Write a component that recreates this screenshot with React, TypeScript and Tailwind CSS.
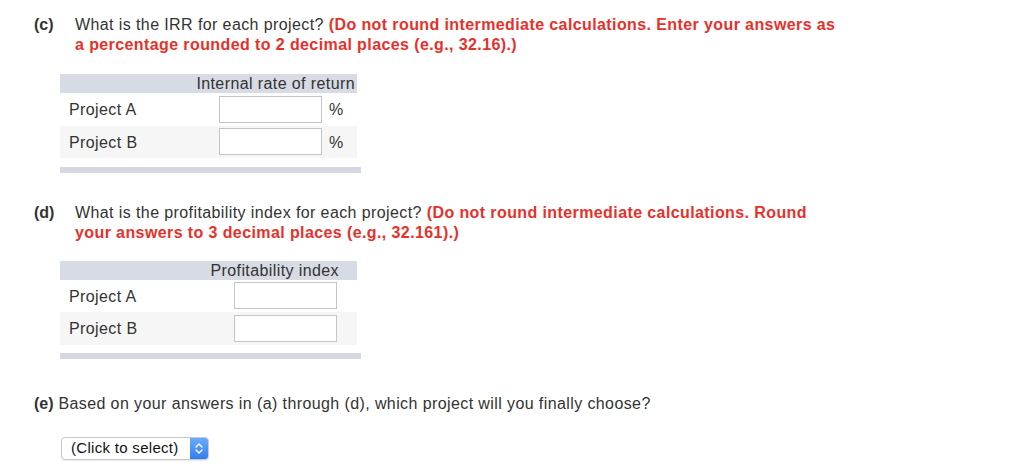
import React from "react";

const font = { fontFamily: '"Liberation Sans", Arial, Helvetica, sans-serif' };

function Question({ label, plain, red }: { label: string; plain: string; red: string[] }) {
  return (
    <div className="flex text-[16px] leading-[20px] tracking-[0.4px] text-[#333]">
      <div className="w-[41px] shrink-0 font-bold tracking-normal">{label}</div>
      <div>
        <div>
          {plain} <span className="font-bold text-[#e8302a]">{red[0]}</span>
        </div>
        <div className="font-bold text-[#e8302a]">{red[1]}</div>
      </div>
    </div>
  );
}

function AnswerTable({
  heading,
  inputLeft,
  percent,
}: {
  heading: string;
  inputLeft: number;
  percent: boolean;
}) {
  const rows = ["Project A", "Project B"];
  return (
    <div className="ml-[26px] w-[301px] text-[16px] tracking-[0.4px] text-[#333]">
      <div className="flex h-[19px] w-[297px] items-center justify-end bg-[#d6dbe4] pr-[2px] leading-[19px]">
        <span className={percent ? "" : "pr-[16px]"}>{heading}</span>
      </div>
      {rows.map((r, i) => (
        <div
          key={r}
          className={`flex h-[32.5px] w-[297px] items-center ${i === 1 ? "bg-[#f6f6f6]" : "bg-white"}`}
        >
          <div className="pl-[9px] pt-[2px]" style={{ width: inputLeft }}>
            {r}
          </div>
          <input
            type="text"
            className="h-[27px] w-[103px] border border-[#c4c4c4] bg-white outline-none"
          />
          {percent && <div className="pl-[7px] pt-[2px]">%</div>}
        </div>
      ))}
      <div className="mt-[8.5px] h-[6px] w-[301px] bg-[#d3d8e2]" />
    </div>
  );
}

export default function App() {
  return (
    <div className="min-h-[476px] bg-white pl-[34px] pt-[15px]" style={font}>
      <Question
        label="(c)"
        plain="What is the IRR for each project?"
        red={[
          "(Do not round intermediate calculations. Enter your answers as",
          "a percentage rounded to 2 decimal places (e.g., 32.16).)",
        ]}
      />
      <div className="mt-[19px]">
        <AnswerTable heading="Internal rate of return" inputLeft={159} percent />
      </div>

      <div className="mt-[30px]">
        <Question
          label="(d)"
          plain="What is the profitability index for each project?"
          red={[
            "(Do not round intermediate calculations. Round",
            "your answers to 3 decimal places (e.g., 32.161).)",
          ]}
        />
      </div>
      <div className="mt-[18px]">
        <AnswerTable heading="Profitability index" inputLeft={174} percent={false} />
      </div>

      <div className="mt-[35px] text-[16px] leading-[20px] tracking-[0.4px] text-[#333]">
        <span className="font-bold tracking-normal">(e)</span> Based on your answers in (a) through (d),
        which project will you finally choose?
      </div>

      <div className="ml-[27px] mt-[23px] flex h-[23px] w-[148px] items-stretch overflow-hidden rounded-[4px] border border-[#c8c8c8] bg-white shadow-[0_1px_1px_rgba(0,0,0,0.08)]">
        <div className="flex flex-1 items-center pl-[9px] text-[15px] tracking-[0.3px] text-[#111]">
          (Click to select)
        </div>
        <div className="flex w-[18px] items-center justify-center bg-gradient-to-b from-[#6aaaf8] to-[#2f7ef0]">
          <svg width="8" height="13" viewBox="0 0 8 13" fill="none">
            <path d="M1 5 L4 2 L7 5" stroke="white" strokeWidth="1.4" strokeLinecap="round" strokeLinejoin="round" />
            <path d="M1 8 L4 11 L7 8" stroke="white" strokeWidth="1.4" strokeLinecap="round" strokeLinejoin="round" />
          </svg>
        </div>
      </div>
    </div>
  );
}
